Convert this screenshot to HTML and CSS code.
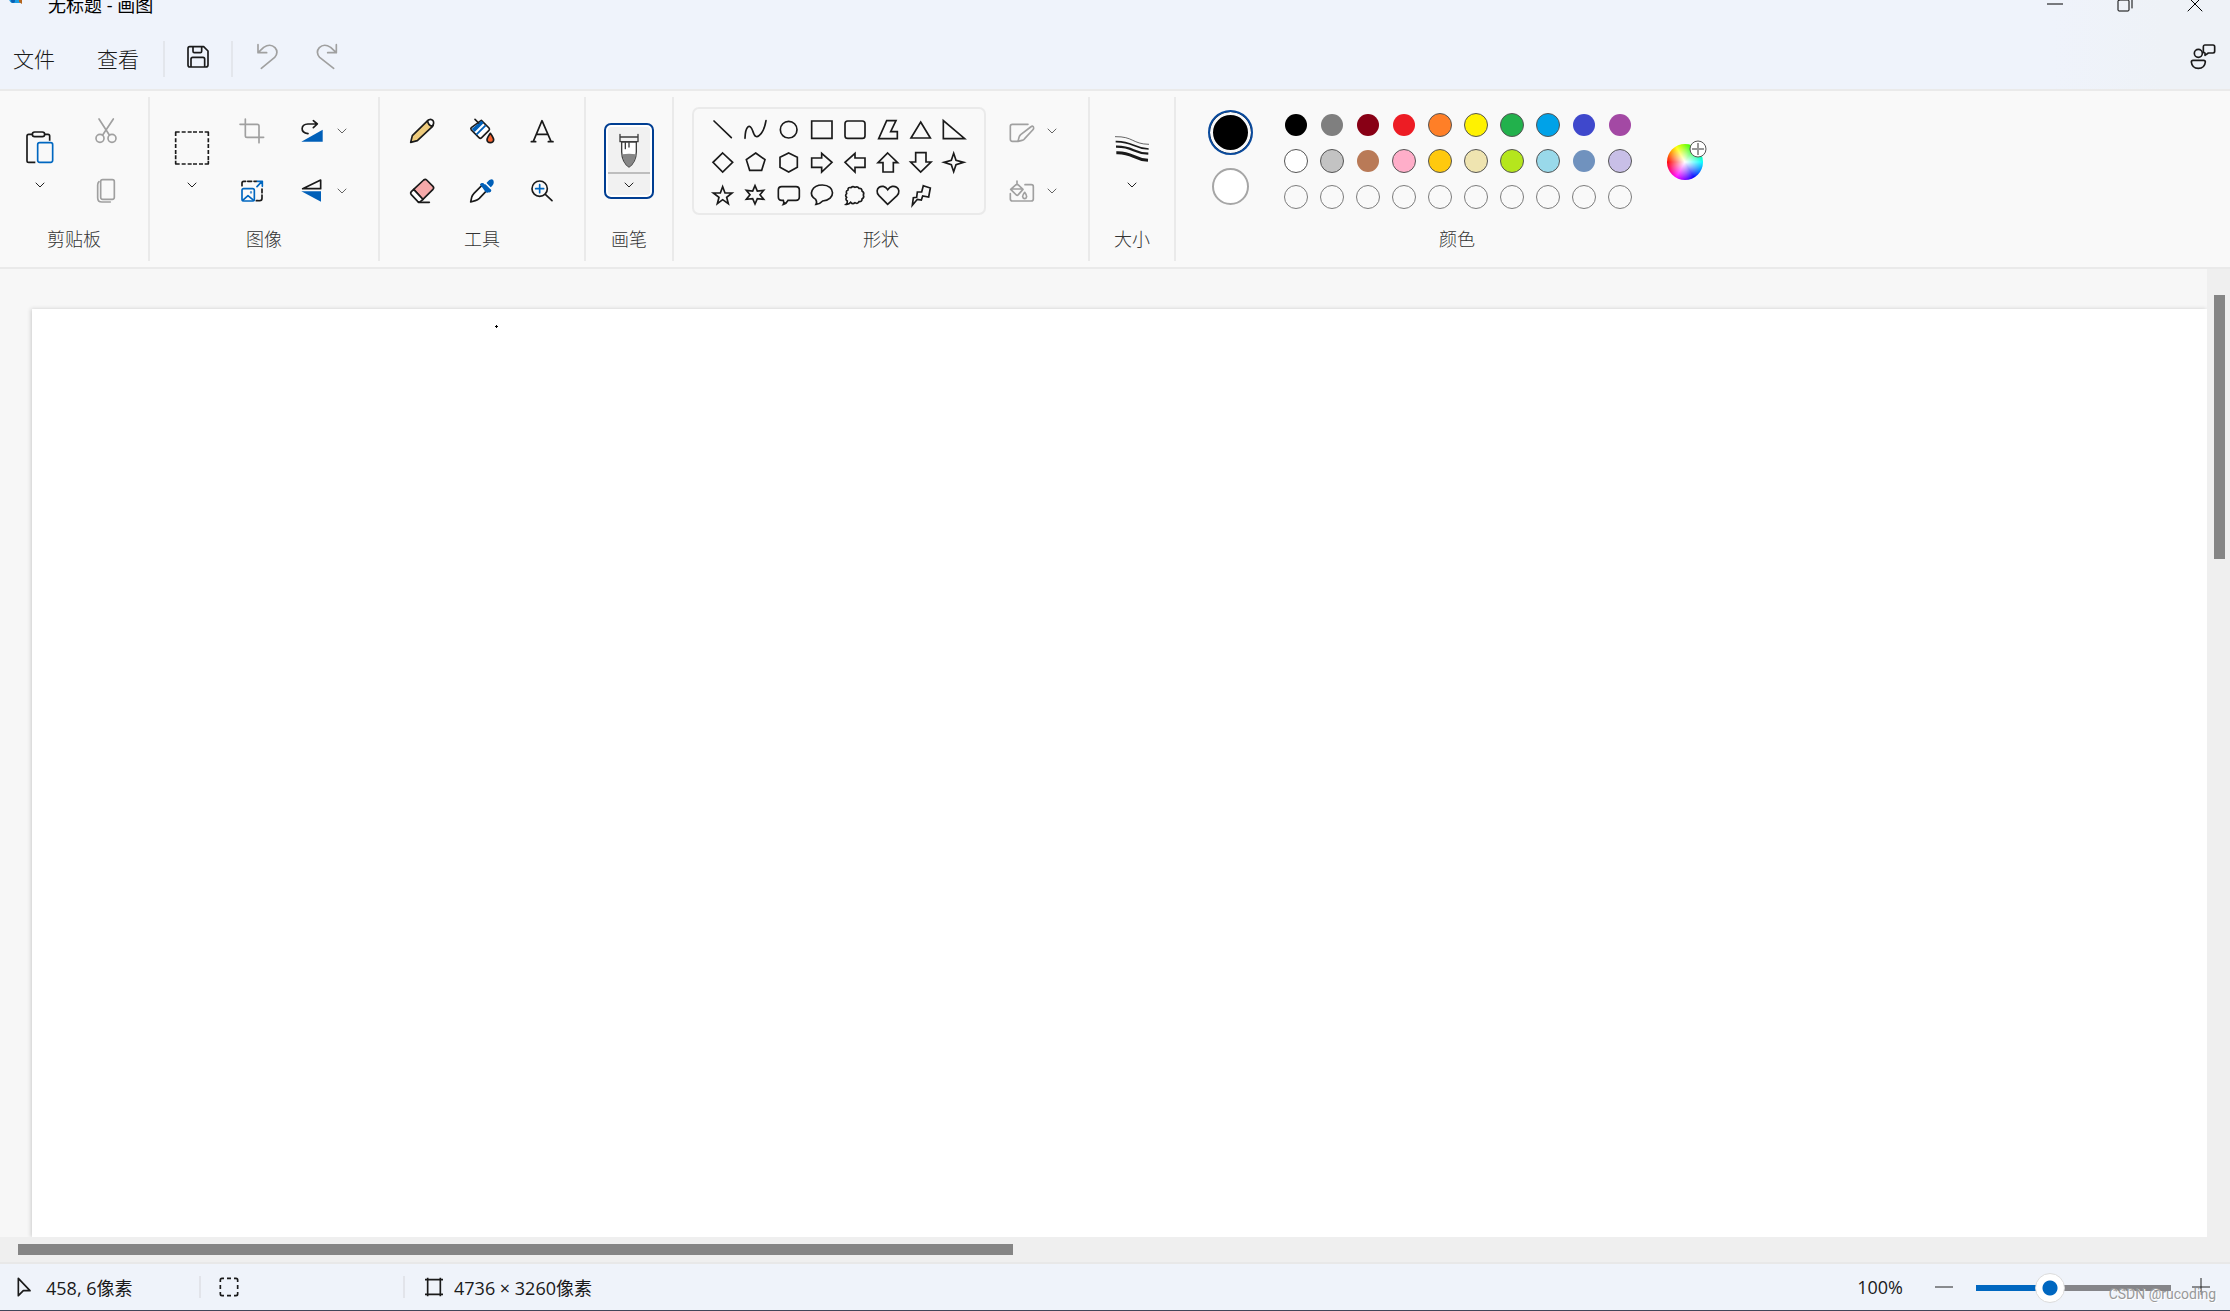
FILE: index.html
```html
<!DOCTYPE html>
<html lang="zh-CN">
<head>
<meta charset="utf-8">
<meta name="viewport" content="width=device-width, initial-scale=1">
<title>无标题 - 画图</title>
<link rel="stylesheet" href="styles.css">
</head>
<body>
<svg class="defs" aria-hidden="true">
  <symbol id="chev" viewBox="0 0 12 12"><path d="M2 4l4 4 4-4"/></symbol>
</svg>

<header class="top">
  <div class="titlebar">
    <svg class="logo" viewBox="0 0 24 24" aria-hidden="true"><path fill="#1b9de2" d="M2 12C2 4 8 1 13 2s9 6 8 10-5 3-6 5 2 6-1 6H6C3 22 2 17 2 12z"/><circle cx="7" cy="21" r="2" fill="#0a5fb4"/><path fill="#b5651d" d="M13 10h3v14l-3-2z"/></svg>
    <h1 class="title">无标题 - 画图</h1>
    <div class="window-controls">
      <button aria-label="最小化"><svg viewBox="0 0 16 16"><path d="M0 8h16"/></svg></button>
      <button aria-label="还原"><svg viewBox="0 0 16 16"><rect x="1" y="4" width="11" height="11" rx="1"/><path d="M4 1h8q3 0 3 3v8"/></svg></button>
      <button aria-label="关闭"><svg viewBox="0 0 16 16"><path d="M1 1l14 14M15 1L1 15"/></svg></button>
    </div>
  </div>
  <nav class="menubar">
    <button class="menu">文件</button>
    <button class="menu">查看</button>
    <span class="rule"></span>
    <button class="command save" aria-label="保存"><svg class="icon" viewBox="548 127 96 96"><path d="M571 141h42l13 13v42q0 6-6 6h-49q-5 0-5-6v-49q0-6 5-6zM581 142v13q0 4 4 4h18q4 0 4-4v-13M575 202v-24q0-5 5-5h31q5 0 5 5v24"/></svg></button>
    <span class="rule"></span>
    <button class="command undo" aria-label="撤消" disabled><svg class="icon" viewBox="753 127 96 96"><path d="M774 135v24h26M775 158l16-15q20-13 34 1 12 14-1 29l-40 33"/></svg></button>
    <button class="command" aria-label="重做" disabled><svg class="icon" viewBox="930 127 96 96"><path d="M1006 135v24h-26M1005 158l-16-15q-20-13-34 1-12 14 1 29l42 33"/></svg></button>
    <button class="command feedback" aria-label="反馈"><svg class="icon" viewBox="561 127 96 96"><circle cx="595" cy="161" r="12"/><path d="M579 182h32q5 0 5 5-2 19-21 19t-21-19q0-5 5-5zM614 136h25q5 0 5 5v14q0 5-5 5h-14l-10 7v-7q-5 0-5-5v-14q0-5 4-5z"/></svg></button>
  </nav>
</header>

<section class="ribbon" aria-label="工具栏">
  <section class="group clipboard">
    <div class="tools">
      <button class="large" aria-label="粘贴"><svg class="icon-lg" viewBox="48 369 144 144"><path d="M97 403h-11q-5 0-5 5v74q0 5 5 5h20M134 403h10q5 0 5 5v14"/><rect x="97" y="396" width="37" height="14" rx="7"/><rect class="blue" x="113" y="428" width="45" height="59" rx="6"/></svg><svg class="chev"><use href="#chev"/></svg></button>
      <div class="stack">
        <button aria-label="剪切" disabled><svg class="icon" viewBox="270 345 96 96"><path d="M297 357l31 48M340 357l-32 48"/><circle cx="300" cy="415" r="12"/><circle cx="336" cy="415" r="12"/></svg></button>
        <button aria-label="复制" disabled><svg class="icon" viewBox="270 525 96 96"><rect x="302" y="539" width="41" height="59" rx="6"/><path d="M297 545q-4 4-4 10v38q0 13 13 13h25"/></svg></button>
      </div>
    </div>
    <h2>剪贴板</h2>
  </section>

  <section class="group image">
    <div class="tools">
      <button class="large" aria-label="选择"><svg class="icon-lg" viewBox="504 369 144 144"><path d="M527 408v-12h12M545 396h12M563 396h12M579 396h12M597 396h12M614 396h11v12M625 415v12M625 432v12M625 450v12M625 468v12M625 482v10h-11M609 492h-12M591 492h-12M575 492h-12M557 492h-12M539 492h-12v-10M527 478v-12M527 462v-12M527 444v-12M527 427v-12"/></svg><svg class="chev"><use href="#chev"/></svg></button>
      <div class="stack">
        <button aria-label="裁剪" disabled><svg class="icon" viewBox="708 345 96 96"><path d="M736 357v50q0 5 5 5h50M720 373h52q5 0 5 5v50"/></svg></button>
        <button aria-label="重设大小"><svg class="icon" viewBox="708 525 96 96"><path d="M726 557v-8q0-5 5-5h6M743 544h12M762 544h8M786 567v11M786 585v10q0 7-7 7M769 602h6"/><g class="blue"><rect x="726" y="566" width="37" height="37" rx="5"/><path d="M728 601l16-14 17 14M771 560l15-16M772 544h15v15"/><circle cx="753" cy="577" r="1"/></g></svg></button>
      </div>
      <div class="stack splits">
        <button class="split" aria-label="旋转"><svg class="icon" viewBox="888 345 96 96"><path d="M924 401c-25-4-22-28 0-29h27M940 362l12 10-12 11"/><path class="solid-blue" d="M904 425l64-36v36z"/></svg><svg class="chev"><use href="#chev"/></svg></button>
        <button class="split" aria-label="翻转"><svg class="icon" viewBox="888 525 96 96"><path d="M908 566l54-26v26z"/><path class="solid-blue" d="M904 574h59v31z"/></svg><svg class="chev"><use href="#chev"/></svg></button>
      </div>
    </div>
    <h2>图像</h2>
  </section>

  <section class="group toolset">
    <div class="tools">
      <button aria-label="铅笔"><svg class="icon" viewBox="108 75 96 96"><path fill="#eecb7c" d="M122 157l5-20 46-45q5-4 13 3 7 8 1 15l-45 42z"/><path fill="#fff" d="M173 92q9-8 16 0 5 8-3 17-12-3-13-17z"/></svg></button>
      <button aria-label="填充"><svg class="icon" viewBox="288 75 96 96"><path fill="#fff" d="M334 91l23 23q3 4 0 7l-22 22q-4 4-8 0l-23-23q-3-4 0-7z"/><path class="solid-blue" d="M334 92l7 7-27 27-9-9zM345 104l4 4-28 28-4-4z"/><path d="M315 88l11 11"/><path fill="#f7632f" d="M361 130q-10 14-10 20 1 8 10 8t10-8q0-6-10-20z"/></svg></button>
      <button aria-label="文本"><svg class="icon" viewBox="468 75 96 96"><path d="M490 154l26-62 27 62M499 133h34M484 155h13M535 155h14"/></svg></button>
      <button aria-label="橡皮擦"><svg class="icon" viewBox="108 255 96 96"><path fill="#f6a9a9" d="M131 298l30-28q5-4 9 0l19 19q4 4 0 9l-31 31z"/><path fill="#fff" d="M131 298l-7 7q-4 4 0 9l19 20q4 4 8 1l8-7z"/><path d="M145 337h33"/></svg></button>
      <button aria-label="颜色选取器"><svg class="icon" viewBox="288 255 96 96"><path fill="#fff" d="M335 287l-23 23q-5 5-7 12l-3 14 14-4q7-2 12-7l22-23"/><path class="solid-blue" d="M330 284q4-6 9-4l6 4 7-8q8-11 17-7 5 8-1 17l-8 9 4 6q0 8-9 6z"/><path stroke="#fff" d="M346 279l15 15"/><path class="solid-blue" d="M330 283q5-6 10-3l17 18q3 6-3 10-4 1-8-3z"/></svg></button>
      <button aria-label="放大镜"><svg class="icon" viewBox="468 255 96 96"><circle cx="509" cy="296" r="23"/><path d="M526 313l20 19"/><path class="blue" d="M509 284v24M497 296h24"/></svg></button>
    </div>
    <h2>工具</h2>
  </section>

  <section class="group brushes">
    <div class="tools">
      <button class="brush" aria-label="画笔"><svg class="brush-icon" viewBox="729 123 96 108"><path d="M750 127v22h54v-22M751 135h52"/><path fill="#fff" d="M755 150v30q1 30 22 45 21-15 22-45v-30z"/><path class="ink" d="M757 187q20-4 41 0-3 26-21 38-18-12-20-38z"/><path d="M766 152v18M777 152v13"/></svg><svg class="chev"><use href="#chev"/></svg></button>
    </div>
    <h2>画笔</h2>
  </section>

  <section class="group shapes">
    <div class="tools">
      <div class="gallery">
        <button aria-label="直线"><svg viewBox="77 69 99 99"><path d="M101 93l52 50"/></svg></button>
        <button aria-label="曲线"><svg viewBox="176 69 99 99"><path d="M194 145c1-38 15-46 23-23 6 20 12 21 20 14 10-8 17-26 20-44"/></svg></button>
        <button aria-label="椭圆形"><svg viewBox="275 69 99 99"><circle cx="325" cy="119" r="25"/></svg></button>
        <button aria-label="矩形"><svg viewBox="374 69 99 99"><path d="M394 93h61v52h-61z"/></svg></button>
        <button aria-label="圆角矩形"><svg viewBox="473 69 99 99"><rect x="494" y="93" width="60" height="52" rx="8"/></svg></button>
        <button aria-label="多边形"><svg viewBox="572 69 99 99"><path d="M619 92h28l-16 33h20v21h-56z"/></svg></button>
        <button aria-label="三角形"><svg viewBox="671 69 99 99"><path d="M721 96l29 48h-58z"/></svg></button>
        <button aria-label="直角三角形"><svg viewBox="770 69 99 99"><path d="M789 92v54h64z"/></svg></button>
        <button aria-label="菱形"><svg viewBox="77 168 99 99"><path d="M127 189l30 28-30 29-29-29z"/></svg></button>
        <button aria-label="五边形"><svg viewBox="176 168 99 99"><path d="M226 189l28 20-10 32h-36l-10-32z"/></svg></button>
        <button aria-label="六边形"><svg viewBox="275 168 99 99"><path d="M325 189l26 13v30l-26 14-26-14v-30z"/></svg></button>
        <button aria-label="右箭头"><svg viewBox="374 168 99 99"><path d="M394 204h30v-14l31 27-31 29v-14h-30z"/></svg></button>
        <button aria-label="左箭头"><svg viewBox="473 168 99 99"><path d="M554 204h-30v-14l-30 27 30 29v-14h30z"/></svg></button>
        <button aria-label="上箭头"><svg viewBox="572 168 99 99"><path d="M622 189l30 29h-13v28h-31v-28h-15z"/></svg></button>
        <button aria-label="下箭头"><svg viewBox="671 168 99 99"><path d="M706 188h31v28h15l-31 30-30-30h15z"/></svg></button>
        <button aria-label="四角星"><svg viewBox="770 168 99 99"><path d="M820 190l7 21 23 6-23 7-7 21-7-21-22-7 22-6z"/></svg></button>
        <button aria-label="五角星"><svg viewBox="77 267 99 99"><path d="M127 290l7 19h21l-16 13 5 19-17-12-16 12 5-19-17-13h21z"/></svg></button>
        <button aria-label="六角星"><svg viewBox="176 267 99 99"><path d="M224 287l7 16 19-2-11 13 11 14-19-2-7 16-7-16-19 2 11-14-11-13 19 2z"/></svg></button>
        <button aria-label="圆角矩形标注"><svg viewBox="275 267 99 99"><path d="M304 290h43q10 0 10 10v21q0 10-10 10h-24q-4 9-14 12 3-5 0-12h-5q-10 0-10-10v-21q0-10 10-10z"/></svg></button>
        <button aria-label="椭圆形标注"><svg viewBox="374 267 99 99"><path d="M406 328c-24-15-11-43 20-43 40 0 41 46 1 48-6 7-11 9-20 10 3-5 2-10-1-15z"/></svg></button>
        <button aria-label="云形标注"><svg viewBox="473 267 99 99"><path d="M503 300q-1-9 9-7 5-6 12-1 8-4 12 3 9-1 9 8 8 4 4 12 4 8-4 12 0 9-9 8-4 8-12 3-7 6-13-1-5 7-14 6 5-4 4-10-7-4-2-11-6-6 0-11-3-9 4-11z"/></svg></button>
        <button aria-label="心形"><svg viewBox="572 267 99 99"><path d="M622 343l-26-26c-18-20 11-41 26-18 16-23 46-2 28 18z"/></svg></button>
        <button aria-label="闪电形"><svg viewBox="671 267 99 99"><path d="M729 287l21 7-5 27-18-3-4 12-12-2-15 18 3-23 10-1 2-16h13z"/></svg></button>
      </div>
      <div class="stack splits">
        <button class="split" aria-label="形状轮廓" disabled><svg class="icon" viewBox="978 75 96 96"><path d="M1044 103h-47q-6 0-6 6v39q0 6 6 6h15M1052 111q8-6 9 3 0 4-3 6l-24 26q-3 4-8 5l-12 3 3-12q1-4 5-8z"/></svg><svg class="chev"><use href="#chev"/></svg></button>
        <button class="split" aria-label="形状填充" disabled><svg class="icon" viewBox="978 255 96 96"><path d="M1035 284h19q6 0 6 6v37q0 6-6 6h-57q-6 0-6-6v-16M1011 273v11M1009 283l-17 15 17 17q3 2 6-1l14-16-15-14q-3-3-5-1zM993 297h35M1034 307q-7 10-6 13 1 6 6 6t6-6q0-5-6-13z"/></svg><svg class="chev"><use href="#chev"/></svg></button>
      </div>
    </div>
    <h2>形状</h2>
  </section>

  <section class="group size">
    <div class="tools">
      <button class="large" aria-label="大小"><svg class="icon-lg" viewBox="84 99 144 144"><path stroke-width="2" d="M105 140c55-1 52 22 102 23"/><path stroke-width="5" d="M107 155c54-1 51 21 99 22"/><path stroke-width="7" d="M108 170c53-1 50 20 97 21"/><path stroke-width="9" d="M109 188c50-2 50 21 95 23"/></svg><svg class="chev"><use href="#chev"/></svg></button>
    </div>
    <h2>大小</h2>
  </section>

  <section class="group colors">
    <div class="tools">
      <div class="current">
        <button class="primary" aria-label="颜色 1"></button>
        <button class="secondary" aria-label="颜色 2"></button>
      </div>
      <div class="palette">
        <button class="black" aria-label="黑色"></button><button class="gray" aria-label="灰色"></button><button class="darkred" aria-label="深红色"></button><button class="red" aria-label="红色"></button><button class="orange ringed" aria-label="橙色"></button><button class="yellow ringed" aria-label="黄色"></button><button class="green ringed" aria-label="绿色"></button><button class="turquoise ringed" aria-label="青绿色"></button><button class="indigo" aria-label="靛蓝色"></button><button class="purple" aria-label="紫色"></button>
        <button class="white ringed" aria-label="白色"></button><button class="lightgray ringed" aria-label="浅灰色"></button><button class="brown" aria-label="褐色"></button><button class="rose ringed" aria-label="玫瑰色"></button><button class="gold ringed" aria-label="金色"></button><button class="cream ringed" aria-label="浅黄色"></button><button class="lime ringed" aria-label="酸橙色"></button><button class="sky ringed" aria-label="淡青绿色"></button><button class="bluegray" aria-label="蓝灰色"></button><button class="lavender ringed" aria-label="淡紫色"></button>
        <button class="empty" aria-label="空 1"></button><button class="empty" aria-label="空 2"></button><button class="empty" aria-label="空 3"></button><button class="empty" aria-label="空 4"></button><button class="empty" aria-label="空 5"></button><button class="empty" aria-label="空 6"></button><button class="empty" aria-label="空 7"></button><button class="empty" aria-label="空 8"></button><button class="empty" aria-label="空 9"></button><button class="empty" aria-label="空 10"></button>
      </div>
      <button class="wheel" aria-label="编辑颜色"><svg viewBox="0 0 18 18"><circle cx="9" cy="9" r="8"/><path d="M9 3v12M3 9h12"/></svg></button>
    </div>
    <h2>颜色</h2>
  </section>
</section>

<main class="workspace">
  <div class="viewport">
    <div class="canvas"><svg class="drawing" viewBox="0 0 3 3" aria-label="画布"><path d="M1 0h1v1h1v1H2v1H1V2H0V1h1z"/></svg></div>
  </div>
  <div class="scroll-y"><div class="thumb"></div></div>
  <div class="scroll-x"><div class="thumb"></div></div>
</main>

<footer class="status">
  <div class="cell position"><svg viewBox="0 0 60 60" class="status-icon"><path d="M13 4v52l15-15h20z"/></svg><span>458, 6像素</span></div>
  <span class="rule"></span>
  <div class="cell selection"><svg viewBox="0 0 60 60" class="status-icon"><path d="M4 15V9q0-5 5-5h6M24 4h12M45 4h6q5 0 5 5v6M56 24v12M56 45v6q0 5-5 5h-6M36 56H24M15 56H9q-5 0-5-5v-6M4 36V24"/></svg></div>
  <span class="rule"></span>
  <div class="cell"><svg viewBox="0 0 60 60" class="status-icon"><path d="M11 2v56M49 2v56M3 8h54M3 52h54"/></svg><span>4736 × 3260像素</span></div>
  <div class="zoom">
    <output for="zoom-level">100%</output>
    <button aria-label="缩小"><svg viewBox="0 0 18 18"><path d="M0 9h18"/></svg></button>
    <input type="range" id="zoom-level" min="0" max="100" value="36" aria-label="缩放">
    <button aria-label="放大"><svg viewBox="0 0 18 18"><path d="M0 9h18M9 0v17"/></svg></button>
  </div>
  <span class="watermark">CSDN @rucoding</span>
</footer>
</body>
</html>
```

FILE: styles.css
```css
* { box-sizing: border-box; }

body {
  margin: 0;
  height: 100vh;
  display: flex;
  flex-direction: column;
  overflow: hidden;
  background: #f9f9f9;
  color: #1a1a1a;
  font-family: "Open Sans", "Noto Sans CJK SC", sans-serif;
  font-size: 18px;
  font-weight: 300;
}

h1, h2 { margin: 0; font-size: 18px; font-weight: 300; }

button {
  display: flex;
  align-items: center;
  justify-content: center;
  margin: 0;
  padding: 0;
  border: 0;
  background: none;
  color: inherit;
  font: inherit;
}

svg {
  fill: none;
  stroke: #1a1a1a;
  stroke-linejoin: round;
  stroke-linecap: round;
}

.defs { display: none; }
.icon { width: 32px; height: 32px; stroke-width: 5; }
.icon-lg { width: 48px; height: 48px; stroke-width: 5; stroke-linecap: butt; }
.chev { width: 12px; height: 12px; stroke: #222; }
button:disabled svg { stroke: #a0a0a0; }
.blue { stroke: #0067c0; }
.solid-blue { fill: #005fb8; stroke: none; }

/* Title and menu */
.top {
  flex: none;
  overflow: hidden;
  border-bottom: 2px solid #eaeaea;
  background: linear-gradient(90deg, #eff3fb 92%, #eef2f7 97%);
}

.titlebar {
  display: flex;
  align-items: center;
  height: 48px;
  margin-top: -20px;
}

.logo { width: 24px; height: 24px; align-self: flex-start; margin-left: 6px; stroke: none; }
.title { margin-left: 18px; color: #000; font-weight: 400; }
.window-controls { display: flex; margin-left: auto; }
.window-controls button { width: 70px; height: 48px; }
.window-controls svg { width: 16px; height: 16px; stroke: #000; }

.menubar { display: flex; align-items: center; height: 61px; }
.menu { height: 40px; padding: 0 13px 2px; font-size: 21px; }
.menu + .menu { margin-left: 16px; }
.menu + .rule { margin-left: 11px; }
.rule { width: 2px; height: 36px; background: #e3e6ec; }
.command { width: 60px; height: 40px; padding-bottom: 2px; }
.save { width: 66px; }
.undo { margin-left: 4px; }
.feedback { width: 54px; margin-left: auto; }

/* Ribbon */
.ribbon {
  flex: none;
  display: flex;
  padding: 6px 0;
  border-bottom: 2px solid #eaeaea;
}

.group {
  flex: none;
  display: flex;
  flex-direction: column;
  height: 164px;
  border-right: 2px solid #eaeaea;
}

.group:last-child { border-right: 0; }
.group h2 { line-height: 36px; text-align: center; color: #333; }
.tools { display: flex; height: 124px; padding: 4px 0 0 14px; }
.clipboard { width: 150px; }
.clipboard .tools { gap: 18px; padding-left: 12px; }
.image { width: 230px; }
.image .tools { gap: 12px; }
.image .splits { margin-left: 8px; }
.toolset { width: 206px; }
.brushes { width: 88px; }
.shapes { width: 416px; }
.size { width: 86px; }
.colors { width: 562px; }

.large {
  flex-direction: column;
  justify-content: flex-start;
  gap: 8px;
  width: 56px;
  padding-top: 22px;
}

.stack { display: grid; grid-template-rows: 60px 60px; width: 40px; }
.splits { width: 60px; }
.split .icon { margin: 0 4px; }
.split .chev { margin: 0 4px; stroke: #666; }
.split:disabled .chev { stroke: #666; }

.toolset .tools {
  display: grid;
  grid-template: 60px 60px / repeat(3, 60px);
  padding-left: 12px;
}

.brushes .tools { align-items: center; justify-content: center; padding-left: 0; }
.brush {
  flex-direction: column;
  gap: 10px;
  width: 50px;
  height: 76px;
  padding-top: 2px;
  border: 2px solid #003e92;
  border-radius: 7px;
  background: linear-gradient(#bdbdbd, #bdbdbd) center 47px / 42px 2px no-repeat, #f1f1f1;
  box-shadow: inset 0 0 0 2px #fff;
}
.brush-icon { width: 32px; height: 36px; stroke: #3c3c3c; stroke-width: 4; }
.ink { fill: #868686; stroke: none; }

.shapes .tools { gap: 16px; padding-left: 18px; }
.gallery {
  display: grid;
  grid-template-columns: repeat(8, 33px);
  grid-auto-rows: 33px;
  width: 294px;
  height: 108px;
  margin-top: 6px;
  padding: 4px 12px;
  border: 2px solid #eaeaea;
  border-radius: 7px;
}
.gallery svg { width: 33px; height: 33px; stroke-width: 5; stroke-linejoin: miter; }

/* Colours */
.colors .tools { padding: 10px 0 0 32px; }
.current {
  display: flex;
  flex-direction: column;
  align-items: center;
  gap: 13px;
  width: 45px;
  margin: 3px 25px 0 0;
}
.primary { width: 45px; height: 45px; border: 2px solid #0a4a9c; border-radius: 50%; background: #000; box-shadow: inset 0 0 0 3px #f9f9f9; }
.secondary { width: 37px; height: 37px; border: 2px solid #a6a6a6; border-radius: 50%; background: #fff; }

.palette {
  display: grid;
  grid-template-columns: repeat(10, 36px);
  grid-auto-rows: 36px;
  place-items: center;
}
.palette button { width: 24px; height: 24px; border: 1px solid transparent; border-radius: 50%; background-clip: padding-box; }
.palette .ringed { border-color: #555; background-clip: border-box; }
.palette .empty { border-color: #7c7c7c; }
.black { background-color: #000; }
.gray { background-color: #7f7f7f; }
.darkred { background-color: #880015; }
.red { background-color: #ed1c24; }
.orange { background-color: #ff7f27; }
.yellow { background-color: #fff200; }
.green { background-color: #22b14c; }
.turquoise { background-color: #00a2e8; }
.indigo { background-color: #3f48cc; }
.purple { background-color: #a349a4; }
.white { background-color: #fff; }
.lightgray { background-color: #c3c3c3; }
.brown { background-color: #b97a57; }
.rose { background-color: #ffaec9; }
.gold { background-color: #ffc90e; }
.cream { background-color: #efe4b0; }
.lime { background-color: #b5e61d; }
.sky { background-color: #99d9ea; }
.bluegray { background-color: #7092be; }
.lavender { background-color: #c8bfe7; }

.wheel {
  position: relative;
  width: 36px;
  height: 36px;
  margin: 37px 0 0 29px;
  border-radius: 50%;
  background:
    radial-gradient(closest-side, #fff, transparent),
    conic-gradient(from 270deg, #f00, #ff0, #0f0, #0ff, #00f, #f0f, #f00);
}
.wheel svg { position: absolute; top: -4px; right: -4px; width: 18px; height: 18px; fill: #fff; stroke: #555; stroke-linecap: butt; }
.wheel path { stroke: #999; stroke-width: 2; }

/* Workspace */
.workspace {
  flex: 1;
  min-height: 0;
  display: grid;
  grid-template: 1fr 25px / 1fr 23px;
  background: #efefef;
  border-bottom: 2px solid #e8e8e8;
}
.viewport {
  display: flex;
  overflow: hidden;
  padding: 40px 0 0 32px;
  background: #f7f7f7;
}
.canvas { flex: 1; background: #fff; box-shadow: -1px 0 4px #ccc; }
.drawing { display: block; width: 3px; height: 3px; margin: 16px 0 0 463px; fill: #000; stroke: none; }
.thumb { background: #858585; }
.scroll-y { padding: 26px 5px 0 7px; }
.scroll-y .thumb { height: 28%; }
.scroll-x { display: grid; grid-template-columns: 5fr 6fr; padding: 7px 0 7px 18px; }

/* Status bar */
.status {
  position: relative;
  flex: none;
  display: flex;
  align-items: center;
  height: 47px;
  border-bottom: 1px solid #40465a;
  background: #eff3fa;
}
.status .rule { height: 22px; background: #e2e4ea; }
.cell { display: flex; align-items: center; gap: 10px; padding-left: 19px; font-weight: 400; }
.cell span { padding-bottom: 1px; }
.status-icon { width: 20px; height: 20px; stroke-width: 5; stroke-linecap: butt; }
.position { width: 199px; padding-left: 14px; gap: 12px; }
.selection { width: 202px; padding-left: 18px; }
.zoom { display: flex; align-items: center; margin-left: auto; padding-right: 20px; font-weight: 400; }
.zoom button { width: 18px; height: 32px; }
.zoom button svg { width: 18px; height: 18px; stroke: #222; stroke-linecap: butt; }
.zoom output { margin-right: 32px; }
.zoom input {
  appearance: none;
  width: 195px;
  height: 30px;
  margin: 2px 21px 0 23px;
  background: linear-gradient(90deg, #0067c0 38%, #858589 38%) center / 100% 6px no-repeat;
}
.zoom input::-webkit-slider-thumb {
  appearance: none;
  width: 30px;
  height: 30px;
  border: 1px solid #dcdcdc;
  border-radius: 50%;
  background: radial-gradient(circle, #0067c0 7px, #fff 8px);
}
.watermark {
  position: absolute;
  right: 14px;
  bottom: 6px;
  color: #999;
  font: 14px/20px Roboto, sans-serif;
  text-shadow: 1px 1px 0 #fff;
}
```
